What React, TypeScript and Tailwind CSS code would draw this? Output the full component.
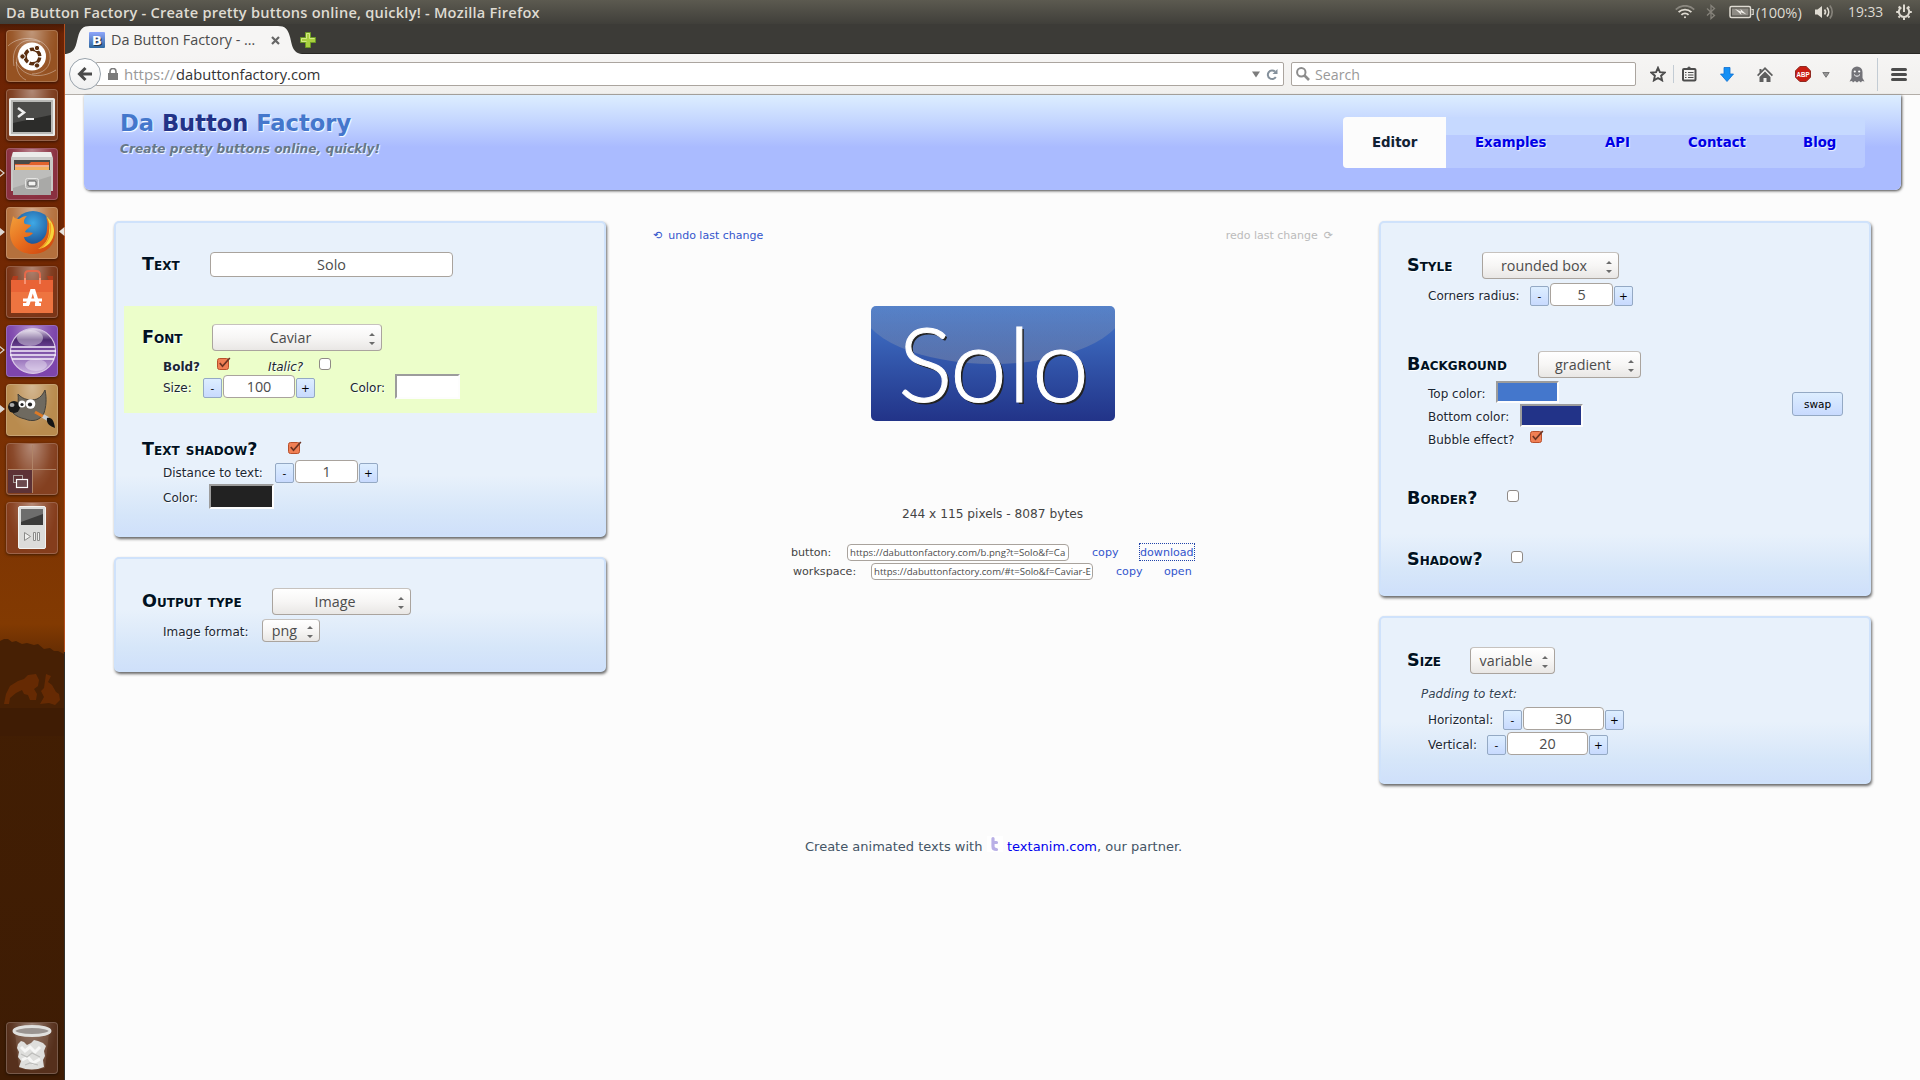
import type { ReactNode } from 'react';

const DEJAVU = "font-['DejaVu_Sans',sans-serif]";
const UI = "font-['Open_Sans',sans-serif]";

/* ---------- form controls ---------- */

function Label({ className = '', children }: { className?: string; children: ReactNode }) {
  return (
    <span className={`shrink-0 whitespace-nowrap text-[12px] leading-[20px] text-[#1b2733] [text-shadow:1px_1px_1px_#fff] ${className}`}>
      {children}
    </span>
  );
}

function Heading({ className = '', children }: { className?: string; children: ReactNode }) {
  return (
    <h2 className={`shrink-0 whitespace-nowrap text-[17.6px] font-bold leading-[20px] text-[#001122] [font-variant:small-caps] [text-shadow:1px_1px_1px_#fff] ${className}`}>
      {children}
    </h2>
  );
}

function Field({ className = '', children }: { className?: string; children: ReactNode }) {
  return (
    <div className={`${UI} flex shrink-0 items-center justify-center rounded-[4px] border border-[#a9a39d] bg-white pt-px text-[14.4px] leading-none text-[#4c4c4c] ${className}`}>
      {children}
    </div>
  );
}

function Select({ className = '', children }: { className?: string; children: ReactNode }) {
  return (
    <div className={`${UI} flex h-[27px] shrink-0 items-center rounded-[4px] border border-[#aaa49e] border-t-[#c6c2be] bg-linear-to-b from-white via-[#f7f6f5] to-[#e9e7e5] text-[14.3px] leading-none text-[#4c4c4c] ${className}`}>
      <span className="flex-1 whitespace-nowrap pr-px pt-px text-center">{children}</span>
      <svg width="6" height="12" viewBox="0 0 6 12" className="mr-[6px] mt-[2px] shrink-0" fill="#6b6b6b">
        <path d="M0 3 3 0l3 3zM0 9h6l-3 3z" />
      </svg>
    </div>
  );
}

function StepButton({ children }: { children: ReactNode }) {
  return (
    <button className="flex h-[20px] w-[19px] shrink-0 items-center justify-center rounded-[2px] border border-[#94a9c4] bg-linear-to-b from-[#ddeeff] to-[#c8dafe] text-[10.5px] leading-none text-black">
      {children}
    </button>
  );
}

function Stepper({ value, width, className = '' }: { value: string; width: string; className?: string }) {
  return (
    <div className={`flex shrink-0 items-end gap-px ${className}`}>
      <StepButton>-</StepButton>
      <Field className={`h-[23px] ${width}`}>{value}</Field>
      <StepButton>+</StepButton>
    </div>
  );
}

function Check({ on = false, className = '' }: { on?: boolean; className?: string }) {
  if (!on) {
    return <span className={`h-[12px] w-[12px] shrink-0 rounded-[3px] border border-[#8f8a86] bg-white ${className}`} />;
  }
  return (
    <svg width="15" height="13" viewBox="0 0 15 13" className={`-mr-[3px] shrink-0 ${className}`}>
      <rect x="0.5" y="1.5" width="11" height="11" rx="2" fill="#f07f54" stroke="#b8502c" />
      <path d="M2.8 6 5.500 9.300 12.800 1" fill="none" stroke="#6b3322" strokeWidth="1.700" />
    </svg>
  );
}

function Swatch({ className = '' }: { className?: string }) {
  return <span className={`shrink-0 border-2 border-b-[#fdfdfd] border-l-[#9c9c9c] border-r-[#fdfdfd] border-t-[#9c9c9c] ${className}`} />;
}

function Row({ className = '', children }: { className?: string; children: ReactNode }) {
  return <div className={`flex items-start ${className}`}>{children}</div>;
}

function Panel({ className = '', children }: { className?: string; children: ReactNode }) {
  return (
    <section className={`w-[492px] overflow-clip rounded-[5px] border-2 border-[#cfe2fb] bg-[#e8f1fb] bg-[linear-gradient(to_top,#cfe0fa_0,#d6e6f9_22px,#e8f1fb_60px)] shadow-[1px_2px_3px_#666] ${className}`}>
      {children}
    </section>
  );
}

/* ---------- desktop ---------- */

function StatusBar() {
  return (
    <header className={`${UI} flex h-[24px] items-center bg-linear-to-b from-[#5c5a50] to-[#403f3a] text-[#dfdbd2]`}>
      <div className="ml-[6px] w-[1670px] whitespace-nowrap text-[14.6px] font-semibold leading-[24px] tracking-[0.225px]">
        Da Button Factory - Create pretty buttons online, quickly! - Mozilla Firefox
      </div>
      <svg width="20" height="14" viewBox="0 0 20 14" fill="none" className="-ml-px shrink-0" stroke="#dfdbd2" strokeWidth="1.8">
        <path d="M.8 4.600a13 13 0 0 1 18.400 0" stroke="#8a877f" />
        <path d="M3.600 7.200a9 9 0 0 1 12.800 0M6.400 9.900a5 5 0 0 1 7.200 0" />
        <circle cx="10" cy="12.200" r="1" fill="#dfdbd2" stroke="none" />
      </svg>
      <svg width="10" height="16" viewBox="0 0 10 16" fill="none" className="ml-[11px] shrink-0" stroke="#85827a" strokeWidth="1.300">
        <path d="M1 4.500 8.500 11.500 5 14.500v-13L8.500 4.500 1 11.500" />
      </svg>
      <svg width="25" height="14" viewBox="0 0 25 14" className="ml-[13px] shrink-0">
        <rect x="1" y="1.500" width="20.500" height="11" rx="1.500" fill="none" stroke="#dfdbd2" strokeWidth="1.500" />
        <rect x="3" y="3.500" width="16.500" height="7" fill="#8f8c85" />
        <path d="M22.500 4.500h1.700v5h-1.700" fill="none" stroke="#dfdbd2" strokeWidth="1.200" />
        <path d="M6 4l6 2.600L11.500 4l6 5.500-5.800-2.200.8 2.700z" fill="#f1eee8" />
      </svg>
      <span className="ml-[2px] w-[49px] whitespace-nowrap text-[14.6px] leading-[24px]">(100%)</span>
      <svg width="21" height="16" viewBox="0 0 21 16" className="ml-[9px] shrink-0" fill="none" stroke="#dfdbd2" strokeWidth="1.700">
        <path d="M1 5.500h2.500L8 2v12L3.500 10.500H1z" fill="#dfdbd2" stroke="none" />
        <path d="M10.500 5.500a4 4 0 0 1 0 5M13 3.500a7 7 0 0 1 0 9" />
        <path d="M15.800 1.500a10 10 0 0 1 0 13" stroke="#85827a" />
      </svg>
      <span className="ml-[13px] w-[35px] whitespace-nowrap text-[13.8px] leading-[24px]">19:33</span>
      <svg width="18" height="18" viewBox="0 0 18 18" className="ml-[12px] shrink-0" fill="none" stroke="#dfdbd2">
        <path d="M6.300 4.300a5.200 5.200 0 1 0 5.400 0" strokeWidth="2" />
        <path d="M9 1.500v7.500" strokeWidth="2" />
        <path d="M3.700 3.500 5 5M14.300 3.500 13 5M1.200 9h2M14.800 9h2M3.500 14.500 4.800 13.200M14.500 14.500l-1.300-1.300M9 15v2" strokeWidth="2" />
      </svg>
    </header>
  );
}

function Tile({ color, top = '', children }: { color: string; top?: string; children: ReactNode }) {
  return (
    <div className={`relative ml-[6px] h-[52px] w-[52px] shrink-0 overflow-hidden rounded-[4px] border border-white/20 shadow-[0_1px_3px_rgba(0,0,0,.5)] ${color} ${top}`}>
      <div className="absolute inset-0 bg-[radial-gradient(ellipse_at_50%_0%,rgba(255,255,255,.4)_0,rgba(255,255,255,.05)_55%,transparent_70%)]" />
      <svg width="52" height="52" viewBox="0 0 52 52" className="absolute -left-px -top-px">
        {children}
      </svg>
    </div>
  );
}

function Slot({ left, right = false, children }: { left?: 'open' | 'solid'; right?: boolean; children: ReactNode }) {
  return (
    <div className="relative mb-[7px] flex">
      {children}
      {left && (
        <svg width="6" height="10" viewBox="0 0 6 10" className="absolute -left-px top-[20px]" fill={left === 'solid' ? '#ddd8d2' : 'none'} stroke="#ddd8d2" strokeWidth="1.200">
          <path d="M0 1 5 5 0 9z" />
        </svg>
      )}
      {right && (
        <svg width="6" height="10" viewBox="0 0 6 10" className="absolute left-[59px] top-[20px]" fill="#e6e2dd">
          <path d="M5.500 0v9L0 4.500z" />
        </svg>
      )}
    </div>
  );
}

function Launcher() {
  return (
    <aside className="relative flex w-[65px] shrink-0 flex-col border-r border-[#b4501f] bg-[linear-gradient(#4a1a05_0,#6c2304_10px,#702603_200px,#7c3203_450px,#823a02_600px,#6a2f03_625px,#421e03_680px,#3e1c04_1056px)] pt-[6px]">
      <span className="absolute -right-px bottom-0 top-[628px] w-px bg-[#33302c]" />
      <svg width="64" height="100" viewBox="0 0 64 100" className="absolute left-0 top-[612px]">
        <path d="M0 5 4 3 8 3 12 6 16 5 22 8 27 7 34 9 38 8 44 13 50 12 54 15 58 15 64 18V100H0z" fill="#472004" />
        <path d="M4 68 6 58 10 50 18 45 24 43 28 39 36 38 39 44 38 50 34 53 37 58 36 64 30 64 28 59 24 58 22 54 16 57 10 62 9 68zM46 38l5 2-3 6 4 3 4 7 3 2 1 6-5 5-6-2-9 1 4-7-3-6 3-3z" fill="#7b3204" opacity=".6" />
        <path d="M0 72H64V100H0z" fill="#3f1c04" />
      </svg>

      <Slot>
        <Tile color="bg-[#965222]">
          <g fill="none" stroke="#fff" strokeWidth="1" opacity=".35">
            <path d="M2 16C14 4 40 6 44 24c2 14-8 20-18 20M8 36C4 14 20 6 34 12M50 40c-16 10-34 6-40-8M20 50C6 44 8 20 22 14" />
          </g>
          <circle cx="26" cy="26.500" r="14" fill="#fff" />
          <circle cx="26.500" cy="26.500" r="7.300" fill="none" stroke="#5b2f10" strokeWidth="3.400" strokeDasharray="13.500 1.800" strokeDashoffset="-1" />
          <g fill="#5b2f10" stroke="#fff" strokeWidth="1">
            <circle cx="16.500" cy="26.500" r="2.700" />
            <circle cx="31" cy="18" r="2.700" />
            <circle cx="31" cy="35.500" r="2.700" />
          </g>
        </Tile>
      </Slot>

      <Slot>
        <Tile color="bg-[#7c3b1c]">
          <rect x="3" y="9" width="46" height="38" rx="1.500" fill="#e9e9e7" />
          <rect x="5" y="11" width="42" height="34" fill="#b9b9b6" />
          <rect x="7" y="13" width="38" height="30" fill="#2c2c2a" />
          <path d="M7 13h38v13L7 34z" fill="#4b4b49" />
          <path d="m12 19 6 4.500-6 4.500" fill="none" stroke="#eee" strokeWidth="2.500" />
          <path d="M20 30h8" stroke="#eee" strokeWidth="2" />
        </Tile>
      </Slot>

      <Slot left="open">
        <Tile color="bg-[#8a3040]">
          <path d="M7 4h38l2 6v33H5V10z" fill="#c9c9c7" />
          <path d="M7 4h38l1 5H6z" fill="#ececea" />
          <rect x="8" y="12" width="36" height="10" fill="#4a4a47" />
          <path d="M9 16h14l2-2h18v9H9z" fill="#e2622c" />
          <path d="M9 19h34v4H9z" fill="#f3b160" />
          <path d="M9 18h34" stroke="#fff" strokeWidth="1" />
          <path d="M7 22h38v25H7z" fill="#a9a9a7" />
          <path d="M7 22h38v6L7 40z" fill="#bdbdbb" />
          <rect x="19.500" y="30.500" width="13" height="10" rx="2" fill="#b5b5b3" stroke="#e5e5e3" />
          <rect x="22" y="33" width="8" height="5" rx="1" fill="#f3f3f1" stroke="#555" />
        </Tile>
      </Slot>

      <Slot left="solid" right>
        <Tile color="bg-[#b4703d]">
          <defs>
            <radialGradient id="globe" cx=".5" cy=".3" r=".7">
              <stop offset="0" stopColor="#3fa9e6" />
              <stop offset="1" stopColor="#12397e" />
            </radialGradient>
            <linearGradient id="fox" x1="0" y1="0" x2="1" y2="1">
              <stop offset="0" stopColor="#f2a03a" />
              <stop offset=".5" stopColor="#e66a1c" />
              <stop offset="1" stopColor="#c8400e" />
            </linearGradient>
          </defs>
          <circle cx="27" cy="24" r="20" fill="url(#globe)" />
          <path d="M7 9c1 2 3 3 6 3 3-2 5-3 8-3-3 3-4 6-2 8l6 1c-1 3-5 4-6 7 2 1 5 0 8 1-3 4-7 4-9 4 1 6 8 8 13 6 7-3 10-8 10-15 1-5 0-8-1-11 5 5 6 9 6 13 1-5 0-9-2-13 5 6 6 14 5 20-3 12-12 17-22 17C13 47 4 38 4 26 4 19 6 15 7 9z" fill="url(#fox)" />
          <path d="M40 9c3 5 4 9 3 15 0 8-5 15-11 18 9-1 16-8 16-18 0-6-3-11-8-15z" fill="#f7d43b" />
          <path d="M44 16c2 9-1 19-9 25" fill="none" stroke="#f29a22" strokeWidth="1.200" />
        </Tile>
      </Slot>

      <Slot>
        <Tile color="bg-[#7b3517]">
          <path d="M19 18V9q0-4 4-4h7q4 0 4 4v9" fill="none" stroke="#e5694a" strokeWidth="2" />
          <path d="M7 10h5l-1 5H5zM47 10h-6l2 5h4z" fill="#b23c1c" />
          <path d="M5 14h42v33H5z" fill="#ee7440" />
          <path d="M5 14h42v12H5z" fill="#e96336" />
          <path d="M19 18V12M34 18V12" stroke="#f79272" strokeWidth="2" />
          <path d="m19.500 39 5-16h4.500l5 16h-4l-3.200-11.500L23.500 39z" fill="#fff" />
          <path d="M17 32.500h19v3H17zM17 37h6v3h-6zM29 37h6v3h-6z" fill="#fff" />
        </Tile>
      </Slot>

      <Slot left="open">
        <Tile color="bg-[#7d45ac]">
          <defs>
            <linearGradient id="orb" x1="0" y1="0" x2="0" y2="1">
              <stop offset="0" stopColor="#e8dff0" />
              <stop offset=".25" stopColor="#4c2a70" />
              <stop offset=".5" stopColor="#7a4da5" />
              <stop offset="1" stopColor="#cdb6e2" />
            </linearGradient>
          </defs>
          <circle cx="27" cy="26" r="22.500" fill="url(#orb)" stroke="#d8c8e6" strokeWidth="1.200" />
          <ellipse cx="24" cy="13" rx="13" ry="8" fill="#fff" opacity=".4" />
          <ellipse cx="30" cy="40" rx="11" ry="6" fill="#fff" opacity=".35" />
          <path d="M5 22h44M4 26h46M4 30h46M6 34h42" stroke="#f6f0fb" strokeWidth="1.400" />
        </Tile>
      </Slot>

      <Slot left="solid">
        <Tile color="bg-[#b98b4e]">
          <path d="M12 10c5 6 13 7 19 5 4-2 6-5 8-9 2 9 1 17-1 23-4 8-12 9-19 6-5-1-9-3-12-6 4-5 6-10 5-19z" fill="#6f6a60" stroke="#454139" />
          <circle cx="8" cy="23" r="6" fill="#191919" />
          <ellipse cx="6" cy="21" rx="2.500" ry="2" fill="#aaa" />
          <circle cx="16" cy="20" r="3.500" fill="#fff" />
          <circle cx="24.500" cy="20" r="4.800" fill="#fff" />
          <circle cx="16" cy="20.500" r="1.600" fill="#222" />
          <circle cx="24" cy="20.500" r="2.100" fill="#222" />
          <path d="m29 28 9 5" stroke="#dd7a27" strokeWidth="3" />
          <path d="m37 32 5 3" stroke="#c9cdd2" strokeWidth="4" />
          <path d="M41 34c5-1 7 3 8 10-5-2-9-4-8-10z" fill="#151515" />
        </Tile>
      </Slot>

      <Slot>
        <Tile color="bg-[#844020]">
          <path d="M2 27h24v23H2z" fill="#5d3236" />
          <path d="M26.500 2v48M2 26.500h48" stroke="#b08468" strokeWidth="1" />
          <rect x="7.500" y="32.500" width="9" height="7" fill="none" stroke="#aaa09c" />
          <rect x="10.500" y="36.500" width="11" height="8" fill="#6b4a4e" stroke="#fff" strokeWidth="1.200" />
        </Tile>
      </Slot>

      <Slot>
        <Tile color="bg-[#853d1c]">
          <rect x="12.500" y="4.500" width="27" height="42" rx="1.500" fill="#dcdcda" stroke="#f3f3f1" />
          <rect x="15" y="7" width="22" height="16" fill="#3b3b3a" />
          <path d="M15 7h22v5L15 20z" fill="#6d6d6c" />
          <path d="m18.500 30.500 6 4-6 4zM27.500 30.500h2v8h-2zM31.500 30.500h2v8h-2z" fill="#f0f0ee" stroke="#8b8b89" />
        </Tile>
      </Slot>

      <div className="mt-auto mb-[6px]">
        <Tile color="bg-[#56301c]">
          <path d="M9 10 13 46q13 4 26 0l4-36z" fill="#8b6c5b" opacity=".4" />
          <path d="M12 22l3-3 3 1 3 3 4-2 3-3 4 1 5 2 3 3-2 5 1 5-2 4 1 7q-12 5-25 0l2-6-3-4 1-5-2-4z" fill="#dededc" />
          <path d="m15 25 4 4 5-4 5 5 5-5M16 38l6-3 5 6 7-4" fill="none" stroke="#f6f6f5" strokeWidth="3" />
          <path d="m15 32 6 3 5-4 8 4M19 43l5-2 8 2" fill="none" stroke="#bdbdbb" strokeWidth="1.200" />
          <ellipse cx="26" cy="9" rx="18" ry="4.500" fill="#9a9491" stroke="#e0e0de" strokeWidth="3" />
        </Tile>
      </div>
    </aside>
  );
}

function TabStrip() {
  return (
    <div className="flex h-[30px] items-end border-b border-[#282724] bg-[#3c3b37]">
      <div className="relative -mb-px h-[28px] w-[235px] shrink-0">
        <svg width="237" height="28" viewBox="0 0 237 28" className="absolute left-0 top-0">
          <path d="M0 28C11 27 11 18 13 11 15 3 18 0 25 0H213c7 0 10 3 12 11 2 7 2 16 12 17z" fill="#f6f5f4" />
        </svg>
        <div className={`${UI} relative flex h-[28px] items-center pl-[24px]`}>
          <span className="flex h-[16px] w-[16px] items-center justify-center rounded-[1px] bg-linear-to-b from-[#8ea6fb] to-[#2c68a0] font-['DejaVu_Sans',sans-serif] text-[13px] font-bold leading-none text-white [text-shadow:1px_1px_0_#234]">
            B
          </span>
          <span className="ml-[6px] w-[144px] whitespace-nowrap text-[14.4px] leading-[28px] text-[#4c4c4c]">Da Button Factory - …</span>
          <svg width="9" height="9" viewBox="0 0 9 9" className="ml-[16px]" stroke="#666" strokeWidth="2.200">
            <path d="m1 1 7 7M8 1 1 8" />
          </svg>
        </div>
      </div>
      <svg width="16" height="16" viewBox="0 0 16 16" className="mb-[5px]">
        <path d="M5.500.5h5v5h5v5h-5v5h-5v-5h-5v-5h5z" fill="#a9cf3f" stroke="#6c9a24" />
        <path d="M6.500 9.500h-5v-3h5v-5h3v5h5" fill="none" stroke="#d3ea85" />
      </svg>
    </div>
  );
}

function Toolbar() {
  return (
    <div className={`${UI} flex h-[41px] items-center border-b border-[#b3aea8] bg-linear-to-b from-[#f6f5f4] to-[#f1f0ee]`}>
      <div className="z-10 ml-[4px] -mr-[5px] flex h-[32px] w-[32px] shrink-0 items-center justify-center rounded-full border border-[#98a2ab] bg-linear-to-b from-white to-[#f0f0f0]">
        <svg width="16" height="16" viewBox="0 0 16 16" fill="none" stroke="#4a4a4a" strokeWidth="3">
          <path d="M15 8H4M8.500 2 2.500 8l6 6" />
        </svg>
      </div>
      <div className="flex h-[24px] w-[1188px] shrink-0 items-center rounded-r-[2px] border border-[#aba59f] bg-white">
        <svg width="10" height="12" viewBox="0 0 10 12" className="ml-[11px]" fill="#7b7b7b">
          <path d="M0 5h10v7H0z" />
          <path d="M2 6V3.500a3 3 0 0 1 6 0V6" fill="none" stroke="#7b7b7b" strokeWidth="1.600" />
        </svg>
        <span className="ml-[6px] w-[52px] whitespace-nowrap text-[15px] leading-[22px] text-[#999]">https://</span>
        <span className="whitespace-nowrap text-[14.7px] leading-[22px] text-[#333]">dabuttonfactory.com</span>
        <svg width="8" height="7" viewBox="0 0 8 7" className="ml-auto mt-px" fill="#7c7c7c">
          <path d="M0 .5h8L4 6.500z" />
        </svg>
        <svg width="12" height="13" viewBox="0 0 12 13" className="ml-[6px] mr-[5px]" fill="none" stroke="#84909b" strokeWidth="2">
          <path d="M9 3.500A4.300 4.300 0 1 0 9.800 9" />
          <path d="M6.500 6h5V1z" fill="#84909b" stroke="none" />
        </svg>
      </div>
      <div className="ml-[7px] flex h-[24px] w-[345px] shrink-0 items-center rounded-[2px] border border-[#aba59f] bg-white">
        <svg width="14" height="14" viewBox="0 0 14 14" className="ml-[4px]" fill="none" stroke="#8c8c8c">
          <circle cx="5.300" cy="5.300" r="4.200" strokeWidth="2" />
          <path d="m8.500 8.500 4.500 4.500" strokeWidth="2.600" />
        </svg>
        <span className="ml-[5px] mt-px text-[14.2px] leading-[22px] text-[#999]">Search</span>
      </div>
      <svg width="16" height="16" viewBox="0 0 16 16" className="ml-[14px] shrink-0" fill="none" stroke="#4c4c4c" strokeWidth="1.900">
        <path d="m8 1.800 1.900 4.300 4.700.5-3.500 3.100 1 4.700L8 12l-4.100 2.400 1-4.700L1.400 6.600l4.700-.5z" />
      </svg>
      <span className="ml-[7px] h-[18px] w-px bg-[#c3ccd4]" />
      <svg width="16" height="16" viewBox="0 0 16 16" className="ml-[7px] shrink-0" fill="none" stroke="#4c4c4c">
        <rect x="2" y="3" width="12.500" height="11.500" rx="1" strokeWidth="2" />
        <path d="M5.500 3 8 .8 10.500 3z" fill="#4c4c4c" />
        <path d="M4 6.500h1.500M7 6.500h5.500M4 9h1.500M7 9h5.500M4 11.500h1.500M7 11.500h5.500" strokeWidth="1.200" />
      </svg>
      <svg width="14" height="15" viewBox="0 0 14 15" className="ml-[23px] shrink-0" fill="#1490f5">
        <path d="M4 .5h6V7h3.500L7 14.500.5 7H4z" stroke="#0c6fd0" strokeWidth=".8" />
      </svg>
      <svg width="16" height="15" viewBox="0 0 16 15" className="ml-[23px] shrink-0" fill="#5e5e5e">
        <path d="M8 0 16 8l-1.200 1.200L8 2.600 1.200 9.200 0 8l2.500-2.500V2h2v1.500z" />
        <path d="M8 4.500 13.500 10v5H9.500v-4h-3v4h-4v-5z" />
      </svg>
      <svg width="16" height="16" viewBox="0 0 16 16" className="ml-[22px] shrink-0 overflow-visible">
        <path d="M4.800.5h6.400l4.300 4.300v6.400l-4.300 4.300H4.800L.5 11.200V4.800z" fill="#c91d12" stroke="#8f2a22" />
        <text x="8" y="10.600" textAnchor="middle" fontFamily="Liberation Sans" fontWeight="700" fontSize="7" textLength="13" lengthAdjust="spacingAndGlyphs" fill="#fff">
          ABP
        </text>
      </svg>
      <svg width="8" height="6" viewBox="0 0 8 6" className="ml-[11px] mt-[2px] shrink-0" fill="#959595" stroke="#777">
        <path d="M.8.5h6.400L4 5.300z" />
      </svg>
      <svg width="16" height="17" viewBox="0 0 16 17" className="ml-[19px] shrink-0" fill="#737378">
        <path d="M2.500 6a5.500 5.500 0 0 1 11 0v6l2 3.500-2.500-.5-1 1.500-2-1.500-2 1.500-2-1.500-2 1.500-1-1.500-2.500.5 2-3.500z" />
        <circle cx="5.800" cy="5.500" r="1.100" fill="#fff" />
        <circle cx="10.200" cy="5.500" r="1.100" fill="#fff" />
        <path d="M5 8.500q3 3.500 6 0" fill="none" stroke="#fff" />
      </svg>
      <span className="ml-[12px] h-[33px] w-px bg-[#c3ccd4]" />
      <div className="ml-[13px] flex w-[16px] shrink-0 flex-col gap-[2px]">
        <span className="h-[3px] rounded-full bg-[#4c4c4c]" />
        <span className="h-[3px] rounded-full bg-[#4c4c4c]" />
        <span className="h-[3px] rounded-full bg-[#4c4c4c]" />
      </div>
    </div>
  );
}

/* ---------- web page ---------- */

function SiteHeader() {
  return (
    <div className="ml-[19px] flex h-[95px] w-[1817px] items-start rounded-b-[6px] bg-[linear-gradient(#ddeeff_0,#c4d6ff_26px,#aabbff_52px,#aabbff_100%)] shadow-[1px_1px_3px_#444]">
      <div className="ml-[36px] mt-[14px] w-[1223px] [text-shadow:1px_1px_1px_#fff]">
        <h1 className="text-[22.6px] font-bold leading-[28px] text-[#4477cc]">
          Da <span className="text-[#223388]">Button</span> Factory
        </h1>
        <p className="mt-[2px] text-[12.2px] font-bold italic leading-[20px] text-[#667788]">Create pretty buttons online, quickly!</p>
      </div>
      <nav className="mt-[22px] flex h-[51px] w-[522px] overflow-hidden rounded-[4px] bg-[linear-gradient(#c6d9ff_0,#c6d9ff_18px,#b9caff_18px,#b9caff_100%)] text-[13.300px] font-bold leading-[51px] text-[#0000e6] [text-shadow:1px_1px_1px_#eef]">
        <a className="w-[103px] bg-[#fcfcfc] pl-[29px] text-[#112233]">Editor</a>
        <a className="w-[130px] pl-[29px]">Examples</a>
        <a className="w-[83px] pl-[29px]">API</a>
        <a className="w-[115px] pl-[29px]">Contact</a>
        <a className="w-[91px] pl-[29px]">Blog</a>
      </nav>
    </div>
  );
}

function LeftColumn() {
  return (
    <div className="flex w-[492px] shrink-0 flex-col gap-[20px]">
      <Panel className="h-[316px]">
        <Row className="mt-[29px] h-[54px] pl-[26px]">
          <Heading className="mt-[2px] w-[68px]">Text</Heading>
          <Field className="h-[25px] w-[243px]">Solo</Field>
        </Row>
        <div className="ml-[8px] h-[107px] w-[473px] bg-[#ecfeca] pt-[18px]">
          <Row className="h-[33px] pl-[18px]">
            <Heading className="mt-[3px] w-[70px]">Font</Heading>
            <Select className="w-[170px]">Caviar</Select>
          </Row>
          <Row className="h-[17px] pl-[39px]">
            <Label className="w-[54px] font-bold">Bold?</Label>
            <Check on />
            <Label className="ml-[39px] w-[51px] italic">Italic?</Label>
            <Check className="mt-px" />
          </Row>
          <Row className="pl-[39px]">
            <Label className="mt-[4px] w-[40px]">Size:</Label>
            <Stepper value="100" width="w-[72px]" className="mt-px" />
            <Label className="ml-[35px] mt-[4px] w-[45px]">Color:</Label>
            <Swatch className="h-[25px] w-[65px] bg-white" />
          </Row>
        </div>
        <Row className="mt-[26px] h-[21px] pl-[26px]">
          <Heading className="w-[146px]">Text shadow?</Heading>
          <Check on className="mt-[2px]" />
        </Row>
        <Row className="h-[24px] pl-[47px]">
          <Label className="mt-[3px] w-[112px]">Distance to text:</Label>
          <Stepper value="1" width="w-[63px]" />
        </Row>
        <Row className="pl-[47px]">
          <Label className="mt-[4px] w-[46px]">Color:</Label>
          <Swatch className="h-[25px] w-[65px] bg-[#222222]" />
        </Row>
      </Panel>
      <Panel className="h-[115px]">
        <Row className="mt-[29px] h-[31px] pl-[26px]">
          <Heading className="mt-[3px] w-[130px]">Output type</Heading>
          <Select className="w-[139px]">Image</Select>
        </Row>
        <Row className="pl-[47px]">
          <Label className="mt-[3px] w-[99px]">Image format:</Label>
          <Select className="h-[23px]! w-[58px]">png</Select>
        </Row>
      </Panel>
    </div>
  );
}

function Preview() {
  return (
    <div className="relative ml-[265px] mt-[57px] h-[115px] w-[244px]">
      <div className="absolute inset-0 overflow-hidden rounded-[5px] bg-linear-to-b from-[#4477cc] to-[#223388]">
        <div className="absolute -left-[10px] -top-[58px] h-[116px] w-[264px] rounded-[50%] bg-[linear-gradient(transparent_50%,rgba(245,224,171,.1)_50%,rgba(245,224,171,.2)_100%)]" />
      </div>
      <div className="relative flex h-[115px] pl-[27px] font-['Lato',sans-serif] text-[102.500px] font-light leading-[114px] text-white [-webkit-text-stroke:1px_#fff] [text-shadow:2px_2px_0_#222]">
        <span className="w-[52px]">S</span>
        <span className="w-[58px]">o</span>
        <span className="w-[24px]">l</span>
        <span>o</span>
      </div>
    </div>
  );
}

function CenterColumn() {
  const link = 'text-[#3355cc]';
  return (
    <div className="w-[773px] shrink-0 text-[11.100px] text-[#444]">
      <div className="mt-[5px] flex h-[20px] justify-between pl-[47px] pr-[46px] text-[11px] leading-[20px]">
        <span className={link}>⟲<span className="ml-[6px]">undo last change</span></span>
        <span className="text-[#bbbbbb]">redo last change<span className="ml-[6px]">⟳</span></span>
      </div>
      <div className="h-[3px]" />
      <Preview />
      <div className="mt-[83px] text-center text-[12.200px] leading-[20px]">244 x 115 pixels - 8087 bytes</div>
      <Row className="mt-[20px] h-[19px] pl-[185px] leading-[17px]">
        <span className="w-[56px]">button:</span>
        <Field className="h-[17px] w-[222px] justify-start! overflow-hidden px-[2px] text-[9.600px]! whitespace-nowrap">https://dabuttonfactory.com/b.png?t=Solo&amp;f=Ca</Field>
        <a className={`ml-[23px] w-[48px] ${link}`}>copy</a>
        <a className={`h-[16px] outline-1 outline-dotted outline-[#2244aa] ${link}`}>download</a>
      </Row>
      <Row className="h-[19px] pl-[187px] leading-[17px]">
        <span className="w-[78px]">workspace:</span>
        <Field className="h-[17px] w-[222px] justify-start! overflow-hidden px-[2px] text-[9.600px]! whitespace-nowrap">https://dabuttonfactory.com/#t=Solo&amp;f=Caviar-E</Field>
        <a className={`ml-[23px] w-[48px] ${link}`}>copy</a>
        <a className={link}>open</a>
      </Row>
      <div className="mt-[255px] flex h-[20px] items-center pl-[199px] text-[13px] leading-[20px] text-[#445566]">
        <span className="w-[182px] whitespace-nowrap">Create animated texts with</span>
        <span className="-mt-[7px] flex h-[16px] w-[16px] justify-center bg-white">
          <svg width="16" height="16" viewBox="0 0 16 16" fill="none" stroke="#b9b0e6" strokeWidth="3.200">
            <path d="M6 2.500v8q0 3 3.500 3M6 6.500h3.500" strokeLinecap="round" />
          </svg>
        </span>
        <a className="ml-[4px] text-[#0000ee]">textanim.com</a>, our partner.
      </div>
    </div>
  );
}

function RightColumn() {
  return (
    <div className="flex w-[492px] shrink-0 flex-col gap-[20px]">
      <Panel className="h-[375px]">
        <Row className="mt-[29px] h-[31px] pl-[26px]">
          <Heading className="mt-[3px] w-[75px]">Style</Heading>
          <Select className="w-[137px]">rounded box</Select>
        </Row>
        <Row className="h-[68px] pl-[47px]">
          <Label className="mt-[3px] w-[102px]">Corners radius:</Label>
          <Stepper value="5" width="w-[63px]" />
        </Row>
        <Row className="h-[30px] pl-[26px]">
          <Heading className="mt-[3px] w-[131px]">Background</Heading>
          <Select className="w-[103px]">gradient</Select>
        </Row>
        <div className="flex h-[107px] justify-between pl-[47px] pr-[26px]">
          <div>
            <Row className="h-[23px]">
              <Label className="mt-[3px] w-[68px]">Top color:</Label>
              <Swatch className="h-[22px] w-[63px] bg-[#4477cc]" />
            </Row>
            <Row className="h-[23px]">
              <Label className="mt-[3px] w-[92px]">Bottom color:</Label>
              <Swatch className="h-[23px] w-[63px] bg-[#223388]" />
            </Row>
            <Row>
              <Label className="mt-[3px] w-[102px]">Bubble effect?</Label>
              <Check on className="mt-[3px]" />
            </Row>
          </div>
          <button className="mt-[11px] h-[24px] w-[51px] rounded-[3px] border border-[#94a9c4] bg-linear-to-b from-[#ddeeff] to-[#c8dafe] text-[10.500px] leading-[22px] text-black">
            swap
          </button>
        </div>
        <Row className="h-[61px] pl-[26px]">
          <Heading className="w-[100px]">Border?</Heading>
          <Check className="mt-[2px]" />
        </Row>
        <Row className="pl-[26px]">
          <Heading className="w-[104px]">Shadow?</Heading>
          <Check className="mt-[2px]" />
        </Row>
      </Panel>
      <Panel className="h-[168px]">
        <Row className="mt-[29px] h-[37px] pl-[26px]">
          <Heading className="mt-[3px] w-[63px]">Size</Heading>
          <Select className="w-[85px]">variable</Select>
        </Row>
        <Row className="h-[23px] pl-[40px]">
          <Label className="italic text-[#334455]!">Padding to text:</Label>
        </Row>
        <Row className="h-[25px] pl-[47px]">
          <Label className="mt-[3px] w-[75px]">Horizontal:</Label>
          <Stepper value="30" width="w-[81px]" />
        </Row>
        <Row className="pl-[47px]">
          <Label className="mt-[3px] w-[59px]">Vertical:</Label>
          <Stepper value="20" width="w-[81px]" />
        </Row>
      </Panel>
    </div>
  );
}

export default function App() {
  return (
    <div className={`${DEJAVU} flex h-[1080px] w-[1920px] flex-col overflow-hidden bg-[#fcfcfc]`}>
      <StatusBar />
      <div className="flex h-[1056px]">
        <Launcher />
        <div className="flex w-[1855px] flex-col">
          <TabStrip />
          <Toolbar />
          <SiteHeader />
          <main className="ml-[49px] mt-[31px] flex items-start">
            <LeftColumn />
            <CenterColumn />
            <RightColumn />
          </main>
        </div>
      </div>
    </div>
  );
}
